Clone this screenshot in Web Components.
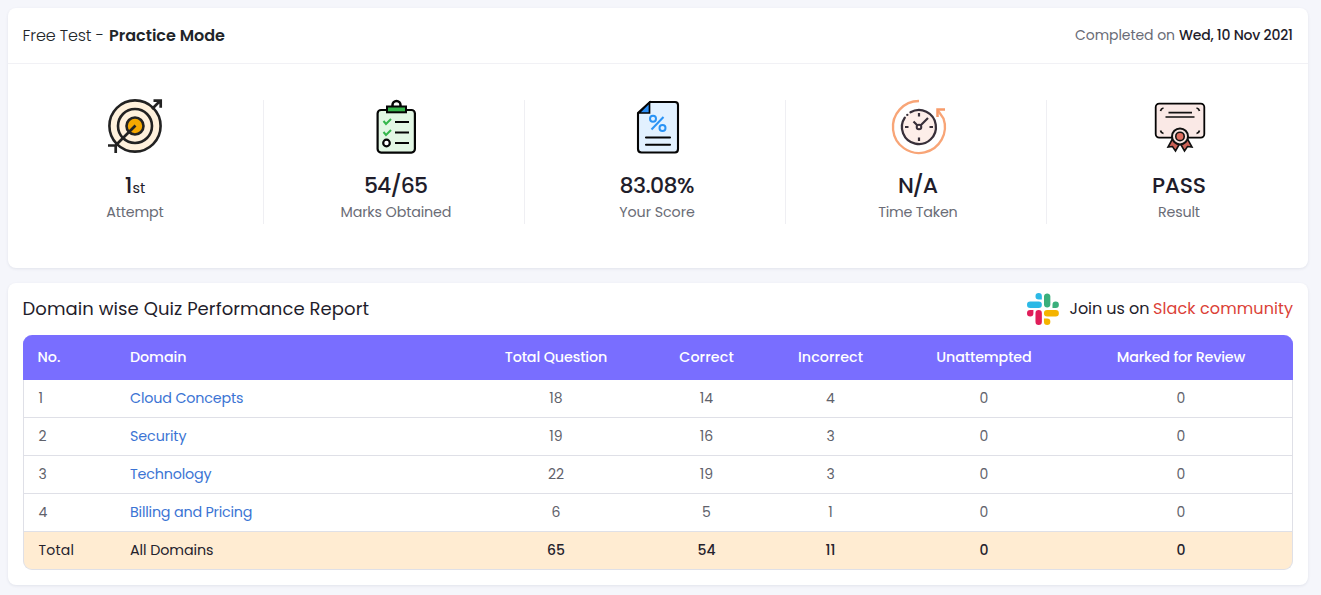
<!DOCTYPE html>
<html lang="en">
<head>
<meta charset="utf-8">
<title>Quiz Report</title>
<style>
body{margin:0;background:#f5f6fb;font-family:Poppins,Inter,"Open Sans",sans-serif;font-size:14px;color:#212529;height:595px;overflow:hidden}
</style>
</head>
<body>
<report-page></report-page>
<script>
class Base extends HTMLElement{
  render(html){ if(!this.shadowRoot) this.attachShadow({mode:'open'}); this.shadowRoot.innerHTML=html; }
}
/* Text that spreads its letter spacing to occupy a given width */
customElements.define('fit-text',class extends Base{
  connectedCallback(){
    this.render(`<style>:host{display:inline-block;white-space:nowrap}span{display:inline-block}</style><span></span>`);
    const s=this.shadowRoot.querySelector('span'), t=this.getAttribute('text'), w=+this.getAttribute('w');
    s.textContent=t;
    if(w&&t.length>1){
      const gap=(w-s.getBoundingClientRect().width)/(t.length-1);
      s.style.letterSpacing=gap.toFixed(3)+'px';
      s.style.marginRight=(-gap).toFixed(3)+'px';
    }
  }
});
const icons={
target:`<g fill="#fff1dc" stroke="#222" stroke-width="2.6"><circle cx="40" cy="36" r="25.6"/><circle cx="40" cy="36" r="17"/><circle cx="40" cy="36" r="8.500" fill="#f5a800"/></g><path d="M20.500 55.500 40.500 35.500M57 19l7.500-7.500M58.500 10.600h7.200v7.200M13 55.500h7.700V63" fill="none" stroke="#222" stroke-width="2.700"/>`,
clipboard:`<rect x="21.600" y="20" width="37.300" height="42.600" rx="3.500" fill="#e2f7e4" stroke="#050505" stroke-width="2.200"/><path d="M36.500 16v-1a4 4 0 0 1 8 0v1" fill="none" stroke="#050505" stroke-width="2.500"/><rect x="31" y="16.500" width="19" height="5.800" fill="#36b44b" stroke="#050505" stroke-width="2"/><path d="m27.500 31 2.500 3 5-5M27.500 42l2.500 3 5-5" fill="none" stroke="#34b64b" stroke-width="2"/><circle cx="30.500" cy="53" r="3.300" fill="#fff" stroke="#050505" stroke-width="2.200"/><path d="M39 32h14M39 42.500h14M39 53h14" stroke="#050505" stroke-width="2"/>`,
score:`<path d="M33 12h25q3 0 3 3v44q0 3.500-3 3.500H24.500q-3.500 0-3.500-3.500V23z" fill="#e2f1ff" stroke="#050505" stroke-width="2.100"/><path d="M22 23 32.500 12.500V23z" fill="#2b8ef5" stroke="#050505" stroke-width="1.700"/><g fill="none" stroke="#2993f5" stroke-width="2"><circle cx="36" cy="28.700" r="3"/><circle cx="45.500" cy="38" r="3"/><path d="m34.500 39.500 12-12.500"/></g><path d="M29 47.500h24M29 54.700h24" stroke="#050505" stroke-width="2.100" stroke-linecap="round"/>`,
clock:`<path d="M41 11a26 26 0 1 0 24.500 17.500L60 20.500" fill="none" stroke="#f8a577" stroke-width="2.300"/><path d="M59.500 27v-7.500H67" fill="none" stroke="#f79b69" stroke-width="2.500"/><circle cx="41" cy="37" r="17" fill="#fdeee9"/><path d="M32.500 22.300a17 17 0 1 1-5.700 5.300M29.300 24.800v.1" fill="none" stroke="#38303a" stroke-width="2.300" stroke-linecap="round"/><path d="M41 23v3.500M41 47.500V51M27 37h3.500M51.500 37H55M35.500 31.500 41 37l9-9" fill="none" stroke="#38303a" stroke-width="2.200"/><circle cx="41" cy="37" r="2.300" fill="#fdeee9" stroke="#38303a" stroke-width="2"/>`,
certificate:`<rect x="16.700" y="13.600" width="48.600" height="34" rx="3.500" fill="#fae9e6" stroke="#050505" stroke-width="1.800"/><path d="M29.500 22.600H53M26.500 27h29" stroke="#111" stroke-width="1.700"/><path d="M21.500 21q.5-2.500 3-3M57.500 18q2.500.5 3 3M21.500 40.500q.5 2.500 3 3M57.500 43.500q2.500-.5 3-3" fill="none" stroke="#111" stroke-width="1.700"/><path d="m34 48-5 9 4.500-.5L36.500 61l4.500-8 4.500 8 3-4.500 4.500.5-5-9z" fill="#cc6257" stroke="#111" stroke-width="1.600"/><circle cx="41" cy="46.400" r="8" fill="#f8e5e1" stroke="#111" stroke-width="2"/><circle cx="41" cy="46.400" r="4.200" fill="#df6f60" stroke="#111" stroke-width="1.600"/>`
};
customElements.define('stat-icon',class extends Base{
  connectedCallback(){this.render(`<style>:host{display:block;width:80px;height:70px}svg{display:block}</style><svg width="80" height="70" viewBox="0 0 80 70">${icons[this.getAttribute('name')]}</svg>`)}
});
customElements.define('slack-logo',class extends Base{
  connectedCallback(){this.render(`<style>:host{display:block;width:32px;height:32px}svg{display:block}</style>
<svg width="32" height="32" viewBox="0 0 54 54"><path fill="#2cb9e6" d="M19.700.1a5.400 5.400 0 0 0 0 10.800h5.400V5.500A5.400 5.400 0 0 0 19.700.1m0 14.400H5.400a5.400 5.400 0 0 0 0 10.800h14.300a5.400 5.400 0 0 0 0-10.800"/><path fill="#3aaf7c" d="M53.800 19.900a5.400 5.400 0 0 0-10.800 0v5.400h5.400a5.400 5.400 0 0 0 5.400-5.400m-14.400 0V5.500a5.400 5.400 0 0 0-10.700 0v14.400a5.400 5.400 0 0 0 10.700 0"/><path fill="#f5b400" d="M34 54a5.400 5.400 0 0 0 0-10.800h-5.400v5.400A5.400 5.400 0 0 0 34 54m0-14.400h14.400a5.400 5.400 0 0 0 0-10.800H34a5.400 5.400 0 0 0 0 10.800"/><path fill="#e01e5a" d="M0 34.200a5.400 5.400 0 0 0 10.800 0v-5.400H5.400A5.400 5.400 0 0 0 0 34.200m14.300 0v14.400a5.400 5.400 0 0 0 10.800 0V34.200a5.400 5.400 0 0 0-10.800 0"/></svg>`)}
});
customElements.define('panel-card',class extends Base{
  connectedCallback(){this.render(`<style>:host{display:block;box-sizing:border-box;background:#fff;border-radius:8px;box-shadow:0 1px 3px rgba(60,64,100,.10)}</style><slot></slot>`)}
});
customElements.define('stat-item',class extends Base{
  connectedCallback(){
    const a=n=>this.getAttribute(n)||'';
    this.render(`<style>
:host{display:flex;flex-direction:column;align-items:center;box-sizing:border-box;height:124px;padding-left:4px;border-right:1px solid #efeff3}
:host([last]){border-color:transparent}
stat-icon{margin-top:-10px}
.v{height:30px;margin-top:11px;display:flex;align-items:baseline;line-height:30px;font-size:22px;font-weight:500;color:#1f1d2b}
.s{font-size:14.500px;font-weight:400}
.l{line-height:24px;margin-top:-1px;font-size:14.300px;color:#6a6c76}
</style><stat-icon name="${a('icon')}"></stat-icon>
<div class="v"><fit-text text="${a('value')}" w="${a('vw')}"></fit-text>${a('suffix')?`<fit-text class="s" text="${a('suffix')}"></fit-text>`:''}</div>
<div class="l"><fit-text text="${a('label')}" w="${a('lw')}"></fit-text></div>`)}
});
customElements.define('summary-card',class extends Base{
  connectedCallback(){this.render(`<style>
:host{display:block}
panel-card{height:260px}
header{box-sizing:border-box;padding:0 15px 0 14.500px;display:flex;justify-content:space-between;align-items:center;border-bottom:1px solid #f1f1f5;height:56px}
.t{font-size:16px;font-weight:300;display:flex;gap:5px}.t b{font-weight:600}
.d{font-size:14px;color:#6a6c76;display:flex;gap:4px}.d b{font-weight:500;color:#1f1d2b}
.g{display:grid;grid-template-columns:repeat(5,261px);margin:36px 0 0 -5px}
</style><panel-card><header><div class="t"><fit-text text="Free Test -" w="81.500"></fit-text><b><fit-text text="Practice Mode" w="116"></fit-text></b></div>
<div class="d"><fit-text text="Completed on" w="100"></fit-text><b><fit-text text="Wed, 10 Nov 2021" w="114"></fit-text></b></div></header>
<div class="g">
<stat-item icon="target" value="1" suffix="st" label="Attempt" lw="57.500"></stat-item>
<stat-item icon="clipboard" value="54/65" vw="64" label="Marks Obtained" lw="111"></stat-item>
<stat-item icon="score" value="83.08%" vw="75" label="Your Score" lw="75.500"></stat-item>
<stat-item icon="clock" value="N/A" vw="40" label="Time Taken" lw="79.500"></stat-item>
<stat-item last icon="certificate" value="PASS" vw="54" label="Result" lw="42"></stat-item>
</div></panel-card>`)}
});
customElements.define('domain-table',class extends Base{
  connectedCallback(){
    const head=[['No.',23],['Domain',56.5],['Total Question',102.5],['Correct',54.5],['Incorrect',65],['Unattempted',95.5],['Marked for Review',128.5]];
    const rows=[['1',['Cloud Concepts',113.5],'18','14','4','0','0'],['2',['Security',56.5],'19','16','3','0','0'],['3',['Technology',81.5],'22','19','3','0','0'],['4',['Billing and Pricing',122.5],'6','5','1','0','0'],[['Total',35.5],['All Domains',83.5],'65','54','11','0','0']];
    const cell=c=>{const [t,w]=Array.isArray(c)?c:[c,0];return `<div><fit-text text="${t}" w="${w}"></fit-text></div>`};
    this.render(`<style>
:host{display:block;height:235px}
.r{display:grid;grid-template-columns:91px 346px 190px 111px 137px 170px 1fr;height:38px;box-sizing:border-box;border:1px solid #dfe0e7;border-top:0;padding-bottom:2px;align-items:center;line-height:20px;color:#5f626b;font-size:14px}
.r>div{text-align:center}.r>div:first-child,.r>div:nth-child(2){text-align:left}
.r>div:first-child{padding-left:14.500px}.r>div:nth-child(2){padding-left:15px}
.r>div:last-child{padding-left:1px}
.r>div:nth-child(2){color:#3b74d4;font-size:14.300px}
.r.h{height:45px;background:#796eff;border-color:#796eff;border-bottom:0;border-radius:9px 9px 0 0;color:#fff;font-weight:500}
.r.h>div{font-size:14.300px}
.r.h>div:first-child{padding-left:13.500px}
.r.h>div:nth-child(2){color:#fff}
.r.f{background:#ffecd2;height:38px;border-radius:0 0 9px 9px;color:#25232d}.r.f>div:nth-child(2){color:#25232d}
.r.f>div:nth-child(n+3){font-weight:500}
</style><div class="r h">${head.map(cell).join('')}</div>${rows.map((r,i)=>`<div class="r${i===4?' f':''}">${r.map(cell).join('')}</div>`).join('')}`)}
});
customElements.define('report-card',class extends Base{
  connectedCallback(){this.render(`<style>
:host{display:block}
panel-card{height:302px;padding:0 15px}
header{height:52px;display:flex;align-items:center;justify-content:space-between;font-size:18px;color:#1f1d2b}
header>fit-text{margin:-2px 0 0 -.5px}
.s{display:flex;align-items:center;font-size:16px;gap:3.500px}slack-logo{margin-right:6.500px}
.s fit-text{margin-top:-2px}
.c{color:#db3f37}
</style><panel-card><header><fit-text text="Domain wise Quiz Performance Report" w="346.500"></fit-text>
<div class="s"><slack-logo></slack-logo><fit-text text="Join us on" w="80"></fit-text><fit-text class="c" text="Slack community" w="140"></fit-text></div></header><domain-table></domain-table></panel-card>`)}
});
customElements.define('report-page',class extends Base{
  connectedCallback(){this.render(`<style>:host{display:flex;flex-direction:column;gap:15px;padding:8px 13px 10px 8px}</style><summary-card></summary-card><report-card></report-card>`)}
});
</script>
</body>
</html>
